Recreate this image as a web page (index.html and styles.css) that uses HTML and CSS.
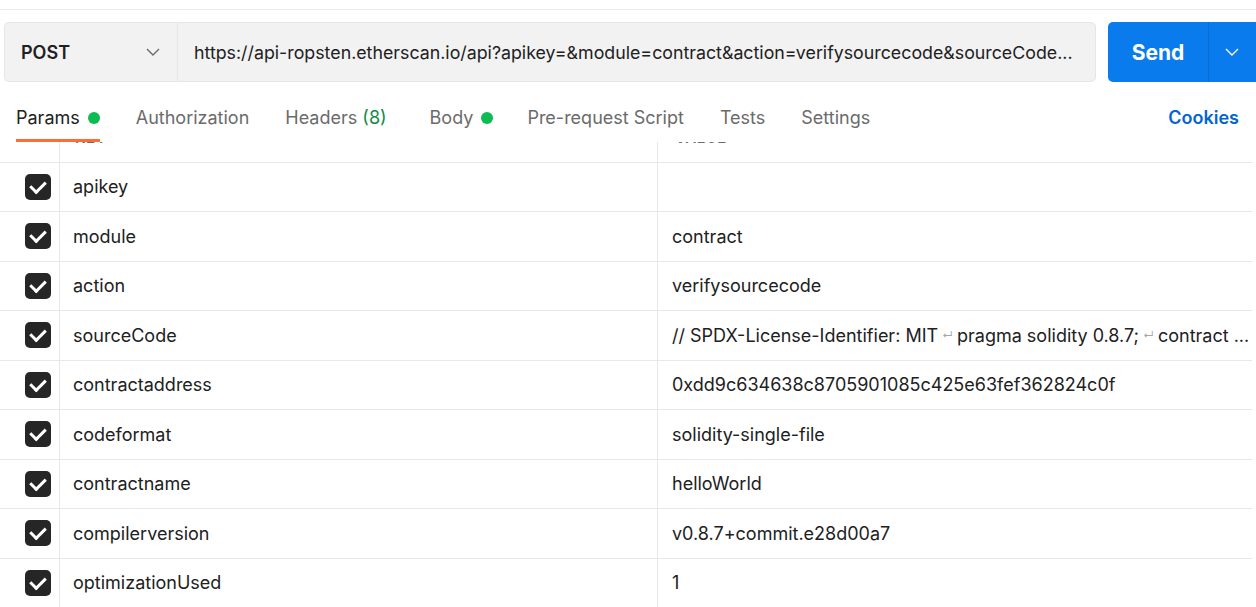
FILE: index.html
```html
<!DOCTYPE html>
<html>
<head>
<meta charset="utf-8">
<link rel="stylesheet" href="styles.css">
</head>
<body>
<div class="topline"></div>
<div class="urlbar">
  <div class="method">
    <span class="method-name">POST</span>
    <svg class="chev" width="14" height="8" viewBox="0 0 14 8"><path d="M1 1l6 6 6-6" fill="none" stroke="#6b6b6b" stroke-width="1.4"/></svg>
  </div>
  <div class="url"><span class="url-text">https://api-ropsten.etherscan.io/api?apikey=&amp;module=contract&amp;action=verifysourcecode&amp;sourceCode...</span></div>
  <div class="send">
    <span class="send-label">Send</span>
    <span class="send-arrow"><svg width="14" height="8" viewBox="0 0 14 8"><path d="M1 1l6 6 6-6" fill="none" stroke="#fff" stroke-width="1.4"/></svg></span>
  </div>
</div>
<div class="tabs">
  <div class="tab active">Params<span class="dot"></span></div>
  <div class="tab">Authorization</div>
  <div class="tab">Headers <span class="count">(8)</span></div>
  <div class="tab tab-body">Body<span class="dot"></span></div>
  <div class="tab">Pre-request Script</div>
  <div class="tab">Tests</div>
  <div class="tab">Settings</div>
  <div class="cookies">Cookies</div>
</div>
<div class="table">
  <div class="row head">
    <div class="c1"></div>
    <div class="c2"><span class="htext">KEY</span></div>
    <div class="c3"><span class="htext">VALUE</span></div>
  </div>
  <div class="row"><div class="c1"><span class="cb"></span></div><div class="c2">apikey</div><div class="c3"></div></div>
  <div class="row"><div class="c1"><span class="cb"></span></div><div class="c2">module</div><div class="c3">contract</div></div>
  <div class="row"><div class="c1"><span class="cb"></span></div><div class="c2">action</div><div class="c3">verifysourcecode</div></div>
  <div class="row"><div class="c1"><span class="cb"></span></div><div class="c2">sourceCode</div><div class="c3">// SPDX-License-Identifier: MIT <span class="nl">↵</span> pragma solidity 0.8.7; <span class="nl">↵</span> contract ...</div></div>
  <div class="row"><div class="c1"><span class="cb"></span></div><div class="c2">contractaddress</div><div class="c3">0xdd9c634638c8705901085c425e63fef362824c0f</div></div>
  <div class="row"><div class="c1"><span class="cb"></span></div><div class="c2">codeformat</div><div class="c3">solidity-single-file</div></div>
  <div class="row"><div class="c1"><span class="cb"></span></div><div class="c2">contractname</div><div class="c3">helloWorld</div></div>
  <div class="row"><div class="c1"><span class="cb"></span></div><div class="c2">compilerversion</div><div class="c3">v0.8.7+commit.e28d00a7</div></div>
  <div class="row"><div class="c1"><span class="cb"></span></div><div class="c2">optimizationUsed</div><div class="c3">1</div></div>
  <div class="row"><div class="c1"><span class="cb"></span></div><div class="c2">runs</div><div class="c3">200</div></div>
</div>
</body>
</html>
```

FILE: styles.css
```css
* { box-sizing: border-box; }
html, body { margin: 0; padding: 0; }
body {
  width: 1256px;
  height: 607px;
  overflow: hidden;
  background: #fff;
  font-family: Inter, "Noto Sans", sans-serif;
  font-size: 18px;
  color: #212121;
}
.topline {
  height: 10px;
  border-bottom: 1px solid #ebebeb;
}
.urlbar {
  display: flex;
  margin-top: 12px;
  padding-left: 4px;
  height: 60px;
}
.method {
  width: 173px;
  flex: none;
  display: flex;
  align-items: center;
  justify-content: space-between;
  padding: 0 17px 0 16px;
  background: #f2f2f2;
  border: 1px solid #e6e6e6;
  border-right: none;
  border-radius: 5px 0 0 5px;
}
.method-name { font-weight: 600; color: #212121; }
.chev { display: block; }
.url {
  width: 919px;
  flex: none;
  display: flex;
  align-items: center;
  padding: 0 12px 0 16px;
  background: #f2f2f2;
  border: 1px solid #e6e6e6;
  border-radius: 0 5px 5px 0;
  overflow: hidden;
}
.url-text {
  white-space: nowrap;
  overflow: hidden;
  font-size: 17.8px;
  color: #212121;
}
.send {
  margin-left: 12px;
  flex: none;
  width: 160px;
  display: flex;
  background: #097bed;
  border-radius: 5px;
  color: #fff;
}
.send-label {
  width: 101px;
  display: flex;
  align-items: center;
  justify-content: center;
  font-weight: 700;
  font-size: 21px;
  border-right: 1px solid #0a6ccf;
}
.send-arrow {
  width: 46px;
  display: flex;
  align-items: center;
  justify-content: center;
}
.send-arrow svg { display: block; }
.tabs {
  display: flex;
  align-items: stretch;
  height: 60px;
  padding: 14px 0 0 16px;
}
.tab {
  display: flex;
  align-items: center;
  margin-right: 36px;
  color: #6b6b6b;
  border-bottom: 3px solid transparent;
  white-space: pre;
}
.tab.active {
  color: #212121;
  border-bottom-color: #ff6c37;
}
.tab-body { margin-left: 7px; margin-right: 34px; }
.dot {
  width: 12px;
  height: 12px;
  border-radius: 50%;
  background: #0cbb52;
  margin-left: 8px;
}
.count { color: #0f8a45; }
.cookies {
  margin-left: auto;
  margin-right: 17px;
  display: flex;
  align-items: center;
  padding-bottom: 3px;
  color: #0265d2;
  font-weight: 600;
}
.table {
  width: 1252px;
  height: 465px;
  overflow: hidden;
}
.row {
  display: grid;
  grid-template-columns: 60px 598px 1fr;
  height: 49.5px;
  border-bottom: 1px solid #e8e8e8;
}
.row.head { height: 20.5px; }
.c1, .c2, .c3 {
  display: flex;
  align-items: center;
  white-space: nowrap;
  overflow: hidden;
}
.c1 { border-right: 1px solid #e8e8e8; padding-left: 25px; }
.c2 { border-right: 1px solid #e8e8e8; padding-left: 13px; }
.c3 { padding-left: 14px; }
.head .c2, .head .c3 { align-items: flex-start; }
.htext {
  display: block;
  font-size: 15px;
  line-height: 20px;
  margin-top: -14.5px;
  font-weight: 600;
  color: #6b6b6b;
  letter-spacing: 0.5px;
}
.head .c2 { padding-left: 15px; }
.head .c3 { padding-left: 17px; }
.cb {
  width: 26px;
  height: 26px;
  border-radius: 5px;
  background: #262626;
  position: relative;
  flex: none;
}
.cb::after {
  content: "";
  position: absolute;
  left: 8px;
  top: 4px;
  width: 7px;
  height: 12px;
  border: solid #fff;
  border-width: 0 3px 3px 0;
  transform: rotate(45deg);
}
.nl {
  font-size: 11px;
  color: #a6a6a6;
  margin: 0 4px;
}
```
